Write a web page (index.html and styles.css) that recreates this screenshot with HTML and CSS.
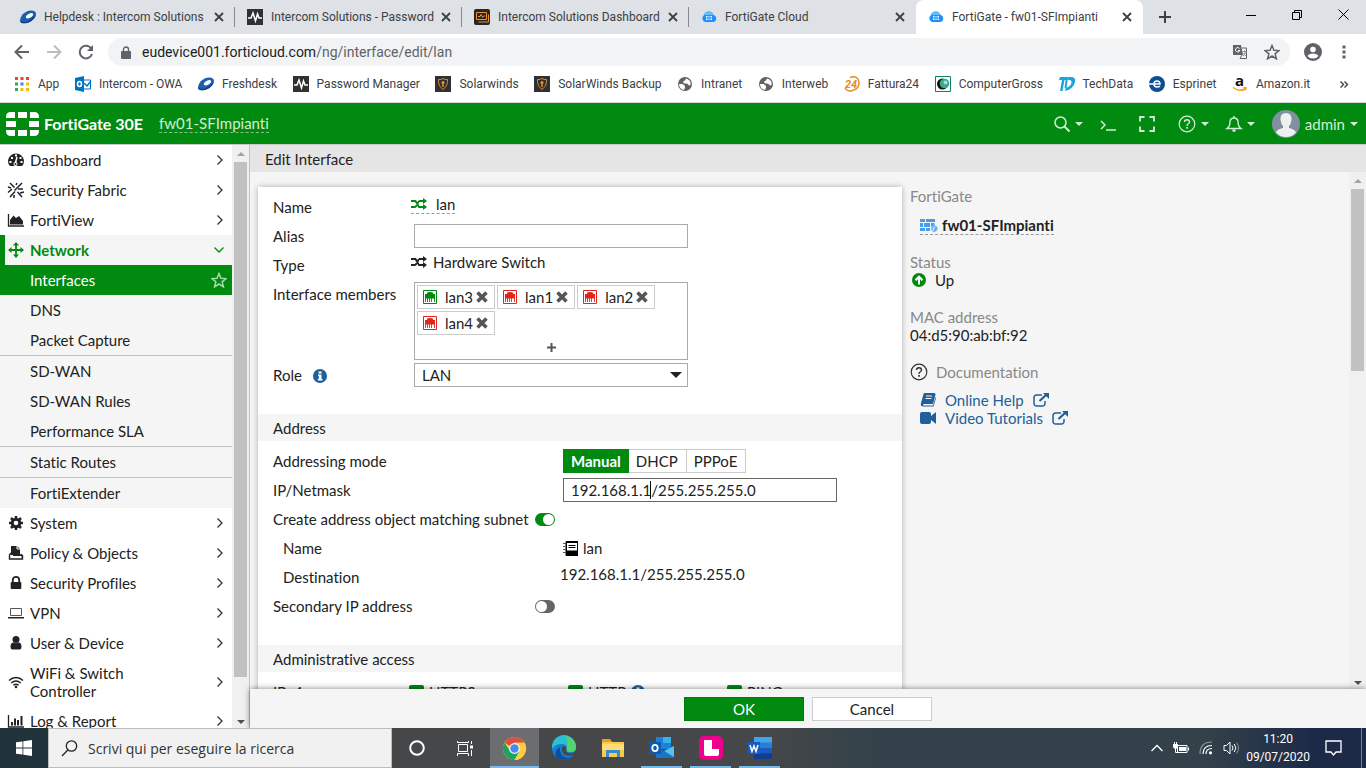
FILE: index.html
```html
<!DOCTYPE html>
<html lang="it">
<head>
	<meta charset="utf-8">
	<title>FortiGate - fw01-SFImpianti</title>
	<link rel="stylesheet" href="styles.css">
</head>
<body>

	<!-- shared icons -->
	<svg class="sprite" aria-hidden="true">
		<symbol id="i-close" viewBox="0 0 10 10"><path d="M1 1l8 8M9 1l-8 8" stroke="currentColor" stroke-width="1.8" fill="none"/></symbol>
		<symbol id="i-fresh" viewBox="0 0 16 16"><path d="M1 8Q4 2 11 1.500 16 1.500 16 5 15 11 8 13.500 1 15.500 0 12 0 10 1 8z" fill="#1b5fb0"/><path d="M0 11Q1 14 7 12.500 13 10 16 5 15 11 8 13.800 1 15.500 0 12z" fill="#0d3f80"/><ellipse cx="9.500" cy="6.800" rx="4" ry="2" transform="rotate(-30 9.500 6.800)" fill="#fff"/></symbol>
		<symbol id="i-pulse" viewBox="0 0 16 16"><path d="M0 0h16v16H0z" fill="#2f3032"/><path d="M1 9h3l2-5 2.500 8 2-7 1.500 4H15" stroke="#fff" stroke-width="1.5" fill="none"/></symbol>
		<symbol id="i-dash" viewBox="0 0 16 16"><rect width="16" height="16" rx="2" fill="#262626"/><path d="M2.500 3.500h10v7h-10zM4.500 13h10V5.500M4 7.500h2l1-2 1.500 3 1-1.500H11" stroke="#f0912d" fill="none"/></symbol>
		<symbol id="i-cloud" viewBox="0 0 16 16"><path d="M4 13a4 4 0 0 1-1-7 5 5 0 0 1 9.500 0A3.600 3.600 0 0 1 12.500 13z" fill="#1e90ff"/><path d="M3 6a5 5 0 0 1 9.500 0z" fill="#5fc0fb"/><path d="M5 7h6v4H5z" fill="#fff"/><path d="M7 7v4M9 7v4M5 9h6" stroke="#1e90ff"/></symbol>
		<symbol id="i-shield" viewBox="0 0 16 16"><path d="M0 0h16v16H0z" fill="#2f3032"/><path d="M3.500 3.500Q6 4 8 2.500 10 4 12.500 3.500 13 10 8 13.500 3 10 3.500 3.500z" stroke="#d98a2b" fill="none"/><circle cx="8" cy="6.500" r="1.500" fill="#f0912d"/><path d="M7.300 7h1.400v4H7.300z" fill="#f0912d"/></symbol>
		<symbol id="i-globe" viewBox="0 0 16 16"><circle cx="8" cy="8" r="7" fill="#5f6368"/><path d="M2 8h3.500L8 10v1.500L7 14Q2 13 2 8zM9 2.500L8 4.500 6 5.500 7 7.500h3l2 2 1.500-.5Q14.500 4 9 2.500z" fill="#fff"/></symbol>
		<symbol id="i-chev" viewBox="0 0 8 12"><path d="M1.500 1.500L6 6l-4.500 4.500" stroke="currentColor" stroke-width="1.3" fill="none"/></symbol>
		<symbol id="i-shuffle" viewBox="0 0 16 12"><path d="M0 3h4.500l3.500 6h5M0 9h4.500M8 3h5M4.500 9L8 3" stroke="currentColor" stroke-width="1.800" fill="none"/><path d="M12 0l4 3-4 3zM12 6l4 3-4 3z" fill="currentColor"/></symbol>
		<symbol id="i-port" viewBox="0 0 16 16"><path d="M1.500 1.500h13v13h-13z" fill="#fff" stroke="currentColor"/><path d="M3 9.500V5h2V3.500h1.500V3h3v.5H11V5h2v4.500z" fill="currentColor"/><path d="M3.500 9v4M5.500 9v4M7.500 9v4M9.500 9v4M12.500 9v4" stroke="currentColor" stroke-width=".9"/></symbol>
		<symbol id="i-x" viewBox="0 0 12 12"><path d="M1.500 1.500l9 9M10.500 1.500l-9 9" stroke="currentColor" stroke-width="3.500" fill="none"/></symbol>
		<symbol id="i-info" viewBox="0 0 14 14"><circle cx="7" cy="7" r="7" fill="#215f9a"/><path d="M5.500 2.500h3v2h-3zM5 5.500h3.500v4.500h1v1.500H4.800V10h1V7H5z" fill="#fff"/></symbol>
		<symbol id="i-ext" viewBox="0 0 16 14"><path d="M9 2H3.500A2.500 2.500 0 0 0 1 4.500v6A2.500 2.500 0 0 0 3.500 13h6a2.500 2.500 0 0 0 2.500-2.500V8" stroke="currentColor" stroke-width="1.500" fill="none"/><path d="M6.500 8L13 2" stroke="currentColor" stroke-width="2.200"/><path d="M10 0h6v6z" fill="currentColor"/></symbol>
		<symbol id="i-help" viewBox="0 0 18 18"><circle cx="9" cy="9" r="7.800" stroke="currentColor" stroke-width="1.200" fill="none"/><path d="M6.500 7Q6.500 4.800 9 4.800T11.500 7Q11.500 8 10 9 9 9.600 9 11" stroke="currentColor" stroke-width="1.400" fill="none"/><path d="M8.200 12h1.700v1.700H8.200z" fill="currentColor"/></symbol>
		<symbol id="i-star" viewBox="0 0 16 16"><path d="M8 1.500l1.900 4.700 5.100.4-3.900 3.200 1.300 5L8 12l-4.400 2.800 1.300-5L1 6.600l5.100-.4z" stroke="currentColor" stroke-width="1.500" fill="none"/></symbol>
	</svg>

	<header class="browser">
		<div class="tabstrip">
			<div class="tab"><svg width="16" height="16"><use href="#i-fresh"/></svg><span class="tab-title">Helpdesk : Intercom Solutions</span><button class="tab-close" aria-label="Chiudi"><svg width="10" height="10"><use href="#i-close"/></svg></button></div>
			<div class="tab"><svg width="16" height="16"><use href="#i-pulse"/></svg><span class="tab-title">Intercom Solutions - Password</span><button class="tab-close" aria-label="Chiudi"><svg width="10" height="10"><use href="#i-close"/></svg></button></div>
			<div class="tab"><svg width="16" height="16"><use href="#i-dash"/></svg><span class="tab-title">Intercom Solutions Dashboard</span><button class="tab-close" aria-label="Chiudi"><svg width="10" height="10"><use href="#i-close"/></svg></button></div>
			<div class="tab tab-last"><svg width="16" height="16"><use href="#i-cloud"/></svg><span class="tab-title">FortiGate Cloud</span><button class="tab-close" aria-label="Chiudi"><svg width="10" height="10"><use href="#i-close"/></svg></button></div>
			<div class="tab tab-active"><svg width="16" height="16"><use href="#i-cloud"/></svg><span class="tab-title">FortiGate - fw01-SFImpianti</span><button class="tab-close" aria-label="Chiudi"><svg width="10" height="10"><use href="#i-close"/></svg></button></div>
			<button class="new-tab" aria-label="Nuova scheda"><svg width="12" height="12" viewBox="0 0 12 12"><path d="M6 0v12M0 6h12" stroke="#3c4043" stroke-width="2"/></svg></button>
			<div class="win-buttons">
				<button aria-label="Riduci"><svg width="10" height="10" viewBox="0 0 10 10"><path d="M0 5.500h10" stroke="#000"/></svg></button>
				<button aria-label="Ripristina"><svg width="10" height="10" viewBox="0 0 10 10"><path d="M.5 2.500h7v7h-7zM2.500 2.500v-2h7v7h-2" stroke="#000" fill="none"/></svg></button>
				<button aria-label="Chiudi finestra"><svg width="11" height="11" viewBox="0 0 11 11"><path d="M.5.5l10 10M10.500.5l-10 10" stroke="#000"/></svg></button>
			</div>
		</div>
		<div class="toolbar">
			<button aria-label="Indietro"><svg width="16" height="16" viewBox="0 0 16 16"><path d="M15 8H2M8 1.500L1.500 8 8 14.500" stroke="#5f6368" stroke-width="2" fill="none"/></svg></button>
			<button aria-label="Avanti"><svg width="16" height="16" viewBox="0 0 16 16"><path d="M1 8h13M8 1.500L14.500 8 8 14.500" stroke="#bbbdbf" stroke-width="2" fill="none"/></svg></button>
			<button aria-label="Ricarica"><svg width="16" height="16" viewBox="0 0 16 16"><path d="M13.500 5A6.300 6.300 0 1 0 14 10" stroke="#5f6368" stroke-width="2" fill="none"/><path d="M15 1v6H9z" fill="#5f6368"/></svg></button>
			<div class="omnibox">
				<svg width="10" height="13" viewBox="0 0 10 13"><path d="M1 5h8q1 0 1 1v6q0 1-1 1H1q-1 0-1-1V6q0-1 1-1z" fill="#5f6368"/><path d="M2.500 5.500V3.500a2.500 2.500 0 0 1 5 0v2" stroke="#5f6368" stroke-width="1.400" fill="none"/></svg>
				<a class="url" href="#">eudevice001.forticloud.com<span>/ng/interface/edit/lan</span></a>
				<button aria-label="Traduci"><svg width="16" height="16" viewBox="0 0 16 16"><path d="M1 1h8l2 10H2q-1 0-1-1z" fill="#5f6368"/><path d="M10 4h4.500v10.500H8L10 11" stroke="#5f6368" fill="none"/><path d="M10.500 7.500h4M12.500 6.500v1M11 12q2-1.500 2.500-4.500M11.500 9l2.500 3" stroke="#8a8d91" fill="none"/><path d="M7.500 4.500a2.200 2.200 0 1 0 .3 2H6" stroke="#fff" fill="none"/></svg></button>
				<button aria-label="Preferiti"><svg width="16" height="16" class="c-gray"><use href="#i-star"/></svg></button>
			</div>
			<button class="profile" aria-label="Profilo"><svg width="18" height="18" viewBox="0 0 18 18"><circle cx="9" cy="9" r="9" fill="#5f6368"/><circle cx="9" cy="6.500" r="2.800" fill="#fff"/><path d="M3.500 13Q5 10.500 9 10.500T14.500 13Q12.500 15.500 9 15.500T3.500 13z" fill="#fff"/></svg></button>
			<button aria-label="Menu"><svg width="4" height="14" viewBox="0 0 4 14"><path d="M.5.5h3v3h-3zM.5 5.500h3v3h-3zM.5 10.500h3v3h-3z" fill="#5f6368"/></svg></button>
		</div>
		<nav class="bookmarks">
			<a href="#"><svg width="16" height="16" viewBox="0 0 16 16"><path d="M1 1h3v3H1zM6.500 1h3v3h-3zM12 1h3v3h-3z" fill="#ea4335"/><path d="M1 6.500h3v3H1z" fill="#34a853"/><path d="M6.500 6.500h3v3h-3z" fill="#4285f4"/><path d="M12 6.500h3v3h-3zM6.500 12h3v3h-3zM12 12h3v3h-3z" fill="#fbbc05"/><path d="M1 12h3v3H1z" fill="#34a853"/></svg>App</a>
			<a href="#"><svg width="16" height="16" viewBox="0 0 16 16"><path d="M8 4h7.500v9H8z" fill="#fff" stroke="#0072c6"/><path d="M9 7l3 3 4-5" stroke="#0072c6" stroke-width="1.500" fill="none"/><path d="M0 2l9-2v16l-9-2z" fill="#0072c6"/><ellipse cx="4.500" cy="8" rx="2" ry="2.500" stroke="#fff" stroke-width="1.500" fill="none"/></svg>Intercom - OWA</a>
			<a href="#"><svg width="16" height="16"><use href="#i-fresh"/></svg>Freshdesk</a>
			<a href="#"><svg width="16" height="16"><use href="#i-pulse"/></svg>Password Manager</a>
			<a href="#"><svg width="16" height="16"><use href="#i-shield"/></svg>Solarwinds</a>
			<a href="#"><svg width="16" height="16"><use href="#i-shield"/></svg>SolarWinds Backup</a>
			<a href="#"><svg width="16" height="16"><use href="#i-globe"/></svg>Intranet</a>
			<a href="#"><svg width="16" height="16"><use href="#i-globe"/></svg>Interweb</a>
			<a href="#"><svg width="16" height="16" viewBox="0 0 16 16"><path d="M6 1.500Q14-1 15 6T7 15Q3 15.500 1 12" stroke="#e88b1c" stroke-width="1.500" fill="none"/><text x="1" y="12" class="ico-24">24</text></svg>Fattura24</a>
			<a href="#"><svg width="16" height="16" viewBox="0 0 16 16"><path d="M.5.5h15v15H.5z" fill="#fff" stroke="#087f68"/><circle cx="7.500" cy="8" r="5.500" fill="#111"/><circle cx="9.500" cy="7.500" r="4.800" fill="#3aa78f"/><circle cx="10.500" cy="6.500" r="2" fill="#a9ddd0"/></svg>ComputerGross</a>
			<a href="#"><svg width="16" height="16" viewBox="0 0 16 16"><path d="M1 1h7L7 4H5.500L3.500 15H1l2-11H0zM9 1h3q5 0 4 5-1.500 7-10 9l.7-3Q12.500 10 12.500 6q0-2-2-2H8.500z" fill="#1ba5dd"/><path d="M8 1L6.500 12" stroke="#1ba5dd" stroke-width="2"/></svg>TechData</a>
			<a href="#"><svg width="16" height="16" viewBox="0 0 16 16"><circle cx="8" cy="8" r="8" fill="#0b4d96"/><path d="M0 8h11Q11 5 8 5T5 8Q5 11 8 11q2 0 3-1" stroke="#fff" stroke-width="1.600" fill="none"/></svg>Esprinet</a>
			<a href="#"><svg width="16" height="16" viewBox="0 0 16 16"><text x="3" y="10" class="ico-a">a</text><path d="M1 11.500q6 4.500 12 1.500M11.500 11.500l2.500.3-.8 2.500" stroke="#f90" stroke-width="1.500" fill="none"/></svg>Amazon.it</a>
			<button class="more" aria-label="Altri preferiti"><svg width="8" height="7" viewBox="0 0 8 7"><path d="M.5.5l3 3-3 3M4.500.5l3 3-3 3" stroke="#3c4043" stroke-width="1.400" fill="none"/></svg></button>
		</nav>
	</header>

	<div class="topbar">
		<svg width="33" height="24" viewBox="0 0 33 24"><path d="M12 0h9v6h-9zM12 18h9v6h-9zM0 9h10v6H0zM23 9h10v6H23zM5 0h4v6H0V5q0-5 5-5zM24 0h4q5 0 5 5v1h-9zM0 18h9v6H5q-5 0-5-5zM24 18h9v1q0 5-5 5h-4z" fill="#fff"/></svg>
		<b class="model">FortiGate 30E</b>
		<a class="host" href="#">fw01-SFImpianti</a>
		<div class="top-actions">
			<button aria-label="Search"><svg width="16" height="16" viewBox="0 0 16 16"><circle cx="6.500" cy="6.500" r="5.500" stroke="currentColor" stroke-width="1.500" fill="none"/><path d="M10.500 10.500L15.500 15.500" stroke="currentColor" stroke-width="2"/></svg><i class="down"></i></button>
			<button class="solo" aria-label="CLI console"><svg width="16" height="16" viewBox="0 0 16 16"><path d="M1 5l4 4-4 4M6 14h10" stroke="currentColor" stroke-width="1.500" fill="none"/></svg></button>
			<button class="solo" aria-label="Full screen"><svg width="16" height="16" viewBox="0 0 16 16"><path d="M1 5.500V1h4.500M10.500 1H15v4.500M15 10.500V15h-4.500M5.500 15H1v-4.500" stroke="currentColor" stroke-width="1.800" fill="none"/></svg></button>
			<button aria-label="Help"><svg width="18" height="18"><use href="#i-help"/></svg><i class="down"></i></button>
			<button aria-label="Notifications"><svg width="16" height="16" viewBox="0 0 16 16"><path d="M1 12.500q3-2 3-7Q4.500 2 8 2t4 3.500q0 5 3 7zM8 0v2" stroke="currentColor" stroke-width="1.400" fill="none"/><path d="M6 13.500h4Q9.500 16 8 16t-2-2.500z" fill="currentColor"/></svg><i class="down"></i></button>
			<button><svg width="28" height="28" viewBox="0 0 28 28"><circle cx="14" cy="14" r="14" fill="#8190a0"/><path d="M14 3q6 0 5.500 7-.5 4-2.500 6v2q6 1 7 4.500Q20 27 14 27T4 22.500Q5 19 11 18v-2q-2-2-2.500-6Q8 3 14 3z" fill="#edf0ef"/></svg>admin<i class="down"></i></button>
		</div>
	</div>

	<div class="workspace">
		<nav class="sidebar">
			<a class="item" href="#"><svg width="16" height="16" viewBox="0 0 16 16"><path d="M2 14a8 7.500 0 1 1 12 0z" fill="currentColor"/><path d="M7 12.500L9 5" stroke="#fff" stroke-width="1.500"/><path d="M7 2.500h2v2H7zM3 5h2v2H3zM11.500 5h2v2h-2zM1.500 9h2v2h-2zM12.500 9h2v2h-2z" fill="#fff"/><circle cx="7.500" cy="12" r="2" fill="#fff"/><circle cx="7.500" cy="12" r="1" fill="currentColor"/></svg><span>Dashboard</span><svg class="chev" width="8" height="12"><use href="#i-chev"/></svg></a>
			<a class="item" href="#"><svg width="16" height="16" viewBox="0 0 16 16"><path d="M2 1l4.500 4.500M14 1L6.500 8.500M9.500 10l4.500 5M2 15l5-5.500M0 5l3 1M0 10.500L4 7M10 7h5M12 11l4-1M9 1L8 3M6 13v3" stroke="currentColor" stroke-width="1.500"/></svg><span>Security Fabric</span><svg class="chev" width="8" height="12"><use href="#i-chev"/></svg></a>
			<a class="item" href="#"><svg width="16" height="16" viewBox="0 0 16 16"><path d="M.5 2v12H16" stroke="currentColor" fill="none" stroke-width="1.300"/><path d="M2 12.500V8l3.500-4.500L8 6l3-2 4 5v3.500z" fill="currentColor"/></svg><span>FortiView</span><svg class="chev" width="8" height="12"><use href="#i-chev"/></svg></a>
			<a class="item item-open" href="#"><svg width="16" height="16" viewBox="0 0 16 16"><path d="M8 2v12M2 8h12" stroke="currentColor" stroke-width="1.800"/><path d="M8 0l3 3.500H5zM8 16l3-3.500H5zM0 8l3.500-3v6zM16 8l-3.500-3v6z" fill="currentColor"/></svg><span>Network</span><svg class="chev" width="12" height="8" viewBox="0 0 12 8"><path d="M1.500 1.500L6 6l4.500-4.500" stroke="currentColor" stroke-width="1.300" fill="none"/></svg></a>
			<div class="submenu">
				<a class="item item-active" href="#"><span>Interfaces</span><svg class="fav" width="16" height="16"><use href="#i-star"/></svg></a>
				<a class="item" href="#"><span>DNS</span></a>
				<a class="item" href="#"><span>Packet Capture</span></a>
				<hr>
				<a class="item" href="#"><span>SD-WAN</span></a>
				<a class="item" href="#"><span>SD-WAN Rules</span></a>
				<a class="item" href="#"><span>Performance SLA</span></a>
				<hr>
				<a class="item" href="#"><span>Static Routes</span></a>
				<hr>
				<a class="item" href="#"><span>FortiExtender</span></a>
			</div>
			<a class="item" href="#"><svg width="16" height="16" viewBox="0 0 16 16"><circle cx="8" cy="8" r="3.800" stroke="currentColor" stroke-width="3" fill="none"/><path d="M8 1v3M8 12v3M1 8h3M12 8h3M3 3l2.500 2.500M13 3l-2.500 2.500M3 13l2.500-2.500M13 13l-2.500-2.500" stroke="currentColor" stroke-width="2.500"/></svg><span>System</span><svg class="chev" width="8" height="12"><use href="#i-chev"/></svg></a>
			<a class="item" href="#"><svg width="16" height="16" viewBox="0 0 16 16"><path d="M3 1h6l3 3v6H3z" fill="currentColor"/><path d="M9 1v3h3" stroke="#fff" fill="none"/><path d="M3 8L1.500 10v4h13v-3.500L12.500 9" stroke="currentColor" stroke-width="1.400" fill="none"/><path d="M5 10.500h9v2" stroke="currentColor" fill="none"/></svg><span>Policy &amp; Objects</span><svg class="chev" width="8" height="12"><use href="#i-chev"/></svg></a>
			<a class="item" href="#"><svg width="16" height="16" viewBox="0 0 16 16"><path d="M3.500 7h9q.8 0 .8.800v5.400q0 .8-.8.800h-9q-.8 0-.8-.8V7.800Q2.700 7 3.500 7z" fill="currentColor"/><path d="M4.800 7V5a3.200 3.200 0 0 1 6.400 0v2" stroke="currentColor" stroke-width="1.800" fill="none"/></svg><span>Security Profiles</span><svg class="chev" width="8" height="12"><use href="#i-chev"/></svg></a>
			<a class="item" href="#"><svg width="16" height="16" viewBox="0 0 16 16"><path d="M2.500 3.500h11v7h-11z" stroke="#555" fill="none"/><path d="M0 12h16v1.500H0z" fill="currentColor"/></svg><span>VPN</span><svg class="chev" width="8" height="12"><use href="#i-chev"/></svg></a>
			<a class="item" href="#"><svg width="16" height="16" viewBox="0 0 16 16"><circle cx="8" cy="4.500" r="3.500" fill="currentColor"/><path d="M2.500 12q0-4.500 3-4.500 2.500 1.500 5 0 3 0 3 4.500 0 2.500-2 2.500h-7q-2 0-2-2.500z" fill="currentColor"/></svg><span>User &amp; Device</span><svg class="chev" width="8" height="12"><use href="#i-chev"/></svg></a>
			<a class="item" href="#"><svg width="16" height="16" viewBox="0 0 16 16"><path d="M1 6.500q7-6 14 0M3.300 9q4.700-4 9.400 0M5.500 11.300q2.500-2 5 0" stroke="currentColor" stroke-width="1.600" fill="none"/><circle cx="8" cy="13" r="1.300" fill="currentColor"/></svg><span>WiFi &amp; Switch Controller</span><svg class="chev" width="8" height="12"><use href="#i-chev"/></svg></a>
			<a class="item" href="#"><svg width="16" height="16" viewBox="0 0 16 16"><path d="M.5 2v12H16" stroke="currentColor" fill="none" stroke-width="1.300"/><path d="M3 9h2v3.500H3zM6 5.500h2v7H6zM9 7h2v5.500H9zM12.500 3h2v9.500h-2z" fill="currentColor"/></svg><span>Log &amp; Report</span><svg class="chev" width="8" height="12"><use href="#i-chev"/></svg></a>
		</nav>
		<div class="scroll scroll-side"><i class="arrow-up"></i><div class="thumb"></div><i class="arrow-down"></i></div>

		<main class="main">
			<h1 class="page-title">Edit Interface</h1>
			<div class="scroller">
				<form class="card" id="lanform">
					<section class="fields">
						<span class="label">Name</span>
						<div class="value"><a class="dashed" href="#"><svg width="16" height="12" class="c-green"><use href="#i-shuffle"/></svg>lan</a></div>
						<label class="label" for="alias">Alias</label>
						<input class="text" type="text" id="alias">
						<span class="label">Type</span>
						<div class="value hw"><svg width="16" height="12"><use href="#i-shuffle"/></svg>Hardware Switch</div>
						<span class="label">Interface members</span>
						<div class="members">
							<span class="tag"><svg width="16" height="16" class="c-green"><use href="#i-port"/></svg><span>lan3</span><button type="button" aria-label="Remove lan3"><svg width="12" height="12"><use href="#i-x"/></svg></button></span>
							<span class="tag"><svg width="16" height="16" class="c-red"><use href="#i-port"/></svg><span>lan1</span><button type="button" aria-label="Remove lan1"><svg width="12" height="12"><use href="#i-x"/></svg></button></span>
							<span class="tag"><svg width="16" height="16" class="c-red"><use href="#i-port"/></svg><span>lan2</span><button type="button" aria-label="Remove lan2"><svg width="12" height="12"><use href="#i-x"/></svg></button></span>
							<span class="tag"><svg width="16" height="16" class="c-red"><use href="#i-port"/></svg><span>lan4</span><button type="button" aria-label="Remove lan4"><svg width="12" height="12"><use href="#i-x"/></svg></button></span>
							<button type="button" class="add" aria-label="Add member"><svg width="9" height="9" viewBox="0 0 9 9"><path d="M4.500 0v9M0 4.500h9" stroke="#555" stroke-width="2"/></svg></button>
						</div>
						<label class="label" for="role">Role <svg width="14" height="14"><use href="#i-info"/></svg></label>
						<div class="select"><select id="role"><option>LAN</option><option>WAN</option><option>DMZ</option></select></div>
					</section>

					<h2>Address</h2>
					<section class="fields fields-wide">
						<span class="label">Addressing mode</span>
						<div class="modes"><button type="button" class="on">Manual</button><button type="button">DHCP</button><button type="button">PPPoE</button></div>
						<label class="label" for="ip">IP/Netmask</label>
						<div class="ip"><input class="text focused" type="text" id="ip" value="192.168.1.1/255.255.255.0"><i class="caret"></i></div>
						<div class="switch-row"><label for="mk">Create address object matching subnet</label><input type="checkbox" class="toggle" id="mk" checked></div>
						<span class="label sub">Name</span>
						<div class="value obj"><svg width="16" height="15" viewBox="0 0 16 15"><path d="M3 .5h11.500v14H3z" fill="#fff" stroke="#000"/><path d="M3 0h12v2H3zM3 9.500h12V15H3z" fill="#000"/><path d="M5.500 4.500h7M5.500 6.500h7M3.500 1v13" stroke="#000"/><path d="M0 2.500h3M0 5.500h3M0 8.500h3M0 11.500h3" stroke="#555"/></svg>lan</div>
						<span class="label sub">Destination</span>
						<div class="value">192.168.1.1/255.255.255.0</div>
						<div class="switch-row"><label for="sec">Secondary IP address</label><input type="checkbox" class="toggle" id="sec"></div>
					</section>

					<h2>Administrative access</h2>
					<section class="access">
						<span>IPv4</span>
						<label><input type="checkbox" class="tick" checked>HTTPS</label>
						<label><input type="checkbox" class="tick" checked>HTTP <svg width="14" height="14"><use href="#i-info"/></svg></label>
						<label><input type="checkbox" class="tick" checked>PING</label>
					</section>
				</form>

				<aside class="info">
					<h3>FortiGate</h3>
					<p class="device"><a class="dashed" href="#"><svg width="18" height="13" viewBox="0 0 18 13"><path d="M0 0h5v3H0zM6 0h9v3H6zM0 4h3v4H0zM4 4h6v4H4zM11 4h3v2l-3 2zM0 9h5v3H0zM6 9h4v3H6z" fill="#4a9be5"/><path d="M14 13q-4-1-2.500-4.500L14.500 4q0 2 1.500 4 .5-.5.500-1.500 1.500 2 1 4Q16.500 13 14 13z" fill="#6fb3ee"/><path d="M13 11.500q0-2 1.500-3.500" stroke="#fff" fill="none"/></svg>fw01-SFImpianti</a></p>
					<h3>Status</h3>
					<p class="status"><svg width="14" height="14" viewBox="0 0 14 14"><circle cx="7" cy="7" r="7" fill="#008a10"/><path d="M7 11.500V4M3.500 7.200L7 3.700l3.500 3.500" stroke="#fff" stroke-width="2" fill="none"/></svg>Up</p>
					<h3>MAC address</h3>
					<p>04:d5:90:ab:bf:92</p>
					<h3 class="docs"><svg width="18" height="18"><use href="#i-help"/></svg>Documentation</h3>
					<a class="doc" href="#"><svg width="16" height="14" viewBox="0 0 16 14"><path d="M5 0h9q2 0 1.500 1.500L13 11H3.500q-1 1 0 1.500H13L15.500 4 16 5l-2.500 8.500H3Q0 13 1 10L3.500 1Q4 0 5 0z" fill="currentColor"/><path d="M6 3h6M5.500 5.500h6" stroke="#f5f5f5"/></svg>Online Help<svg width="16" height="14"><use href="#i-ext"/></svg></a>
					<a class="doc" href="#"><svg width="16" height="12" viewBox="0 0 16 12"><path d="M2 0h7q2 0 2 2v2l5-4v12l-5-4v2q0 2-2 2H2q-2 0-2-2V2Q0 0 2 0z" fill="currentColor"/></svg>Video Tutorials<svg width="16" height="14"><use href="#i-ext"/></svg></a>
				</aside>
				<div class="scroll scroll-main"><i class="arrow-up"></i><div class="thumb"></div><i class="arrow-down"></i></div>
			</div>
			<footer class="actions"><button class="ok" form="lanform">OK</button><button class="cancel">Cancel</button></footer>
		</main>
	</div>

	<footer class="taskbar">
		<button class="start" aria-label="Start"><svg width="16" height="16" viewBox="0 0 16 16"><path d="M0 2.300L6.500 1.400v6.200H0zM7.300 1.300L16 0v7.600H7.300zM0 8.400h6.500v6.200L0 13.700zM7.300 8.400H16V16l-8.700-1.300z" fill="#fff"/></svg></button>
		<label class="search"><svg width="17" height="17" viewBox="0 0 17 17"><circle cx="10.500" cy="6" r="5.200" stroke="#222" stroke-width="1.300" fill="none"/><path d="M6.800 10L1 16" stroke="#222" stroke-width="1.300"/></svg><input type="text" placeholder="Scrivi qui per eseguire la ricerca" aria-label="Cerca"></label>
		<button class="task" aria-label="Cortana"><svg width="16" height="16" viewBox="0 0 16 16"><circle cx="8" cy="8" r="6.800" stroke="#fff" stroke-width="2" fill="none"/></svg></button>
		<button class="task" aria-label="Visualizzazione attività"><svg width="17" height="17" viewBox="0 0 17 17"><path d="M1.500 4.500h9v7h-9zM.5 1v1.500h11V1M.5 16v-2.500h11V16M14.500 1v3M14.500 10v6" stroke="#fff" fill="none"/><path d="M13 5.500h3v3h-3z" fill="#fff"/></svg></button>
		<button class="task task-active" aria-label="Chrome"><svg width="23" height="23" viewBox="0 0 24 24"><circle cx="12" cy="12" r="12" fill="#ffcd40"/><path d="M12 12L1.600 6A12 12 0 0 1 22.400 6H12z" fill="#dd4f40"/><path d="M1.600 6A12 12 0 0 0 12 24l5.500-9.500H7.500z" fill="#1da261"/><path d="M12 6h10.400A12 12 0 0 1 12 24l5-8.500z" fill="#ffcd40"/><circle cx="12" cy="12" r="5.700" fill="#f3f3f3"/><circle cx="12" cy="12" r="4.400" fill="#4a8af4"/></svg></button>
		<button class="task" aria-label="Edge"><svg width="24" height="24" viewBox="0 0 24 24"><circle cx="12" cy="12" r="12" fill="#1580d0"/><path d="M0 11A12 12 0 0 1 24 11q0 5-5 5-5 0-4.500-2.500Q16 8 9.500 8 3 8 0 13z" fill="#2bbfd2"/><path d="M13 0Q24 2 24 12q-1 4-5 4-5 0-4.500-2.500Q17 5 13 0z" fill="#55d36f"/><path d="M8 11q-1 9 7 11 4 0 7-4A12 12 0 0 1 4 21Q2 14 8 11z" fill="#0b4f9c"/><path d="M10 11q4-3 4.500 2.500Q13 16 18 17.500q2 0 6-2.500v3l-2 1Q19 20 15 19.500 9 18 10 11z" fill="#464749"/></svg></button>
		<button class="task" aria-label="Esplora file"><svg width="22" height="19" viewBox="0 0 22 19"><path d="M0 1h8l2 2h12v15H0z" fill="#f8cb4e"/><path d="M0 0h8l2 3H0z" fill="#e8a020"/><path d="M0 5h22v6H0z" fill="#ffdc74"/><path d="M4 18v-7h14v7h-3v-4H7v4z" fill="#398bd0"/></svg></button>
		<button class="task task-run" aria-label="Outlook"><svg width="25" height="22" viewBox="0 0 25 22"><path d="M7 0h15v12H7z" fill="#1b82d8"/><path d="M14 0h8v6h-8z" fill="#35b2ee"/><path d="M7 9l9 6 9-6v11q0 1-1 1H7z" fill="#1a74c8"/><path d="M25 9v11L15 14z" fill="#54c2f2"/><path d="M0 5h12v12H0z" fill="#0b5cb0"/><ellipse cx="6" cy="11" rx="2.700" ry="3.200" stroke="#fff" stroke-width="1.800" fill="none"/></svg></button>
		<button class="task task-run" aria-label="L"><svg width="24" height="24" viewBox="0 0 24 24"><rect width="24" height="24" rx="5" fill="#ec008c"/><path d="M5 4h8v9h7v5q0 2-2 2H7q-2 0-2-2z" fill="#fff"/></svg></button>
		<button class="task task-run" aria-label="Word"><svg width="24" height="22" viewBox="0 0 24 22"><path d="M6 0h18v6H6z" fill="#41a5ee"/><path d="M6 5.500h18V11H6z" fill="#2b7cd3"/><path d="M6 11h18v5.500H6z" fill="#185abd"/><path d="M6 16.500h18V22H6z" fill="#103f91"/><path d="M0 5h12v12H0z" fill="#185abd"/><path d="M2 8l2 6.500L6 9l2 5.500L10 8" stroke="#fff" stroke-width="1.500" fill="none"/></svg></button>
		<div class="tray">
			<svg width="12" height="8" viewBox="0 0 12 8"><path d="M.5 7L6 1.500 11.500 7" stroke="#fff" stroke-width="1.300" fill="none"/></svg>
			<svg width="16" height="12" viewBox="0 0 16 12"><path d="M4.500 3.500h9.500v7H4.500z" stroke="#fff" fill="none"/><path d="M6 5h7v4H6zM15 5.500h1v3h-1zM0 2h5v3q-1 2-2.500 2T0 5z" fill="#fff"/><path d="M1.500 0v2M3.500 0v2M2.500 6v4.500H5" stroke="#fff" fill="none"/></svg>
			<svg width="14" height="14" viewBox="0 0 14 14"><path d="M1 13Q1 1 13 1" stroke="#8d969a" stroke-width="1.200" fill="none"/><path d="M4 13q0-8.500 9-8.500M7 13q0-5.500 6-5.500" stroke="#fff" stroke-width="1.200" fill="none"/><circle cx="11.500" cy="11.800" r="1.600" fill="#fff"/></svg>
			<svg width="17" height="14" viewBox="0 0 17 14"><path d="M1 4.500h2.500L7 1v12L3.500 9.500H1z" stroke="#fff" fill="none"/><path d="M9 4.500q2 2.500 0 5M11.300 3q3 4 0 8" stroke="#fff" fill="none"/><path d="M13.500 1.500q4 5.500 0 11" stroke="#8d969a" fill="none"/></svg>
			<div class="clock">11:20<br>09/07/2020</div>
			<svg width="17" height="16" viewBox="0 0 17 16"><path d="M1 1h15v11h-5l-2.500 3L6 12H1z" stroke="#fff" stroke-width="1.300" fill="none"/></svg>
			<i class="peek"></i>
		</div>
	</footer>
</body>
</html>
```

FILE: styles.css
```css
* {
	box-sizing: border-box;
}

body {
	margin: 0;
	height: 100vh;
	display: flex;
	flex-direction: column;
	overflow: hidden;
	font-family: Lato, "Liberation Sans", sans-serif;
	font-size: 15px;
	line-height: 18px;
	font-variant-ligatures: none;
	color: #222;
}

a {
	color: inherit;
	text-decoration: none;
}

button {
	margin: 0;
	padding: 0;
	border: 0;
	background: none;
	color: inherit;
	font: inherit;
	display: flex;
	align-items: center;
	justify-content: center;
}

svg {
	flex: none;
	overflow: visible;
}

h1, h2, h3, p {
	margin: 0;
	font-size: 15px;
	font-weight: normal;
}

.sprite {
	display: none;
}

.c-green { color: #008a10; }
.c-red { color: #e1251b; }
.c-gray { color: #5f6368; }

/* browser window */
.browser {
	flex: none;
	background: #fff;
	border-bottom: 1px solid #d5d7da;
	font-family: Roboto, "Open Sans", sans-serif;
	font-size: 12px;
	color: #3c4043;
}

.tabstrip {
	display: flex;
	height: 34px;
	padding-left: 8px;
	background: #dee1e6;
}

.tab {
	flex: 0 1 227px;
	min-width: 0;
	display: flex;
	align-items: center;
	padding: 0 8px 0 12px;
	position: relative;
}

.tab:not(.tab-last):not(.tab-active)::after {
	content: "";
	position: absolute;
	right: 0;
	top: 7px;
	height: 20px;
	border-right: 1px solid #85888c;
}

.tab-title {
	flex: 1;
	min-width: 0;
	margin-left: 8px;
	overflow: hidden;
	white-space: nowrap;
}

.tab-close {
	width: 16px;
	height: 16px;
}

.tab-active {
	background: #fff;
	border-radius: 8px 8px 0 0;
}

.new-tab {
	width: 44px;
}

.win-buttons {
	display: flex;
	margin-left: auto;
}

.win-buttons button {
	width: 46px;
	height: 29px;
}

.toolbar {
	display: flex;
	align-items: center;
	gap: 16px;
	height: 36px;
	padding: 0 20px 0 14px;
}

.omnibox {
	flex: 1;
	display: flex;
	align-items: center;
	gap: 16px;
	height: 28px;
	margin: 0 -2px;
	padding: 0 10px 0 13px;
	border-radius: 14px;
	background: #f1f3f4;
}

.url {
	flex: 1;
	margin-left: -5px;
	font-size: 14px;
	color: #202124;
}

.url span {
	color: #5f6368;
}

.profile {
	margin-right: 4px;
}

.bookmarks {
	display: flex;
	align-items: center;
	justify-content: space-between;
	height: 32px;
	padding: 0 18px 4px 14px;
}

.bookmarks a {
	display: flex;
	align-items: center;
	gap: 8px;
	white-space: nowrap;
}

.more {
	margin-left: 14px;
}

.ico-24 {
	font: italic bold 11px Roboto, sans-serif;
	fill: #e88b1c;
}

.ico-a {
	font: bold 15px "Open Sans", sans-serif;
	fill: #111;
}

/* green bar */
.topbar {
	flex: none;
	display: flex;
	align-items: center;
	height: 42px;
	padding: 0 8px 0 6px;
	background: #008a10;
	border-bottom: 1px solid #c8c8c8;
	color: #fff;
}

.model {
	margin: 0 16px 0 5px;
	font-size: 16px;
}

.host {
	border-bottom: 1px dashed #7fc487;
	color: #d5ecd7;
}

.top-actions {
	display: flex;
	align-items: center;
	gap: 17px;
	margin-left: auto;
	color: #d5ecd7;
}

.top-actions button {
	gap: 5px;
}

.top-actions .solo {
	padding-right: 6px;
}

.down {
	border: 4px solid transparent;
	border-top-color: currentColor;
	border-bottom: 0;
}

/* left menu */
.workspace {
	flex: 1;
	min-height: 0;
	display: flex;
}

.sidebar {
	flex: none;
	width: 232px;
	overflow: hidden;
	background: #fff;
}

.item {
	display: flex;
	align-items: center;
	gap: 6px;
	padding: 6px 8px;
}

.item span {
	flex: 1;
	padding-right: 60px;
}

.item svg:first-child {
	margin-bottom: 1px;
}

.item .chev {
	color: #333;
}

.item-open {
	padding-left: 3px;
	border-left: 5px solid #008a10;
	background: #f5f5f5;
	color: #008a10;
	font-weight: bold;
}

.item .fav {
	margin: 0 -3px 0 0;
	color: #a5dbab;
}

.item-open .chev {
	margin-right: -1px;
	color: #008a10;
}

.submenu {
	background: #f5f5f5;
}

.submenu .item {
	padding-left: 30px;
}

.submenu .item-active {
	background: #008a10;
	color: #fff;
}

.submenu hr {
	margin: 0;
	border: 0;
	border-top: 1px solid #c2c2c2;
}

/* scroll bars */
.scroll {
	flex: none;
	width: 17px;
	display: flex;
	flex-direction: column;
	align-items: center;
	padding: 7px 2px 4px;
	background: #f0f0f0;
}

.scroll-side {
	width: 18px;
	border-right: 1px solid #c2c2c2;
}

.thumb {
	align-self: stretch;
	margin-top: 6px;
	background: #c1c1c1;
}

.scroll-side .thumb {
	height: 90%;
}

.scroll-main .thumb {
	height: 36%;
}

.arrow-up {
	border: 4px solid transparent;
	border-bottom-color: #a3a3a3;
	border-top: 0;
}

.arrow-down {
	margin-top: auto;
	border: 4px solid transparent;
	border-top-color: #505050;
	border-bottom: 0;
}

/* page */
.main {
	flex: 1;
	min-width: 0;
	display: flex;
	flex-direction: column;
	background: #f5f5f5;
}

.page-title {
	flex: none;
	padding: 5px 15px 4px;
	background: #e5e5e5;
}

.scroller {
	flex: 1;
	min-height: 0;
	display: flex;
	overflow: hidden;
}

.card {
	flex: 0 1 644px;
	align-self: flex-start;
	margin: 15px 0 0 8px;
	background: #fff;
	box-shadow: 0 0 6px rgba(0, 0, 0, 0.3);
}

.fields {
	display: grid;
	grid-template-columns: 138px 1fr;
	grid-auto-rows: minmax(24px, auto);
	row-gap: 5px;
	padding: 8px 15px 27px;
}

.fields-wide {
	grid-template-columns: 287px 1fr;
}

.label {
	padding-top: 3px;
}

.label svg {
	margin: 0 0 -2px 7px;
}

.sub {
	padding-left: 10px;
}

.dashed {
	display: inline-flex;
	align-items: center;
	gap: 9px;
	border-bottom: 1px dashed #999;
}

.hw, .obj {
	display: flex;
	align-items: center;
	align-self: start;
	gap: 6px;
}

.obj {
	gap: 4px;
	padding: 3px 3px 0;
}

.text {
	width: 274px;
	height: 24px;
	margin-left: 3px;
	padding: 0 7px;
	border: 1px solid #aaa;
	background: #fff;
	color: #222;
	font: inherit;
}

.text.focused {
	border-color: #666;
}

.ip {
	position: relative;
}

/* insertion point inside the focused field */
.caret {
	position: absolute;
	left: 90px;
	top: 3px;
	height: 18px;
	border-left: 1px solid #000;
}

.members {
	display: flex;
	flex-wrap: wrap;
	gap: 2px;
	width: 274px;
	height: 78px;
	margin: 0 0 -2px 3px;
	padding: 2px;
	border: 1px solid #aaa;
}

.tag {
	display: flex;
	align-items: center;
	height: 24px;
	padding: 0 6px 0 4px;
	border: 1px solid #ccc;
}

.tag span {
	margin: 0 3px 0 7px;
}

.tag button {
	color: #555;
}

.add {
	width: 100%;
	height: 20px;
}

.select {
	position: relative;
	width: 274px;
	margin-left: 3px;
}

.select::after {
	content: "";
	position: absolute;
	right: 6px;
	top: 9px;
	border: 6px solid transparent;
	border-top-color: #222;
	border-bottom: 0;
	pointer-events: none;
}

.select select {
	width: 100%;
	height: 24px;
	padding: 0 7px;
	border: 1px solid #aaa;
	border-radius: 0;
	background: #fff;
	color: #222;
	font: inherit;
	appearance: none;
}

.card h2 {
	padding: 5px 15px 4px;
	background: #f5f5f5;
}

.card h2 + section {
	padding-top: 8px;
}

.modes {
	display: flex;
	margin-left: 3px;
}

.modes button {
	height: 24px;
	padding: 0 8px 0 7px;
	border: 1px solid #ccc;
	border-left: 0;
}

.modes .on {
	padding: 0 7px;
	border: 1px solid #008a10;
	background: #008a10;
	color: #fff;
	font-weight: bold;
}

.switch-row {
	grid-column: 1 / -1;
	display: grid;
	grid-template-columns: 262px auto;
	justify-content: start;
	align-items: center;
}

.toggle {
	appearance: none;
	width: 20px;
	height: 13px;
	margin: 0;
	padding: 1px;
	border-radius: 7px;
	background: #666;
}

.toggle::before {
	content: "";
	display: block;
	width: 11px;
	height: 11px;
	border-radius: 50%;
	background: #fff;
}

.toggle:checked {
	background: #008a10;
}

.toggle:checked::before {
	margin-left: auto;
}

.access {
	display: grid;
	grid-template-columns: 136px 159px 159px 1fr;
	padding: 8px 15px 16px;
	line-height: 24px;
}

.access label {
	display: flex;
	align-items: center;
	gap: 5px;
}

.tick {
	appearance: none;
	width: 15px;
	height: 15px;
	margin: 0;
	border-radius: 2px;
	background: #008a10;
}

.tick:checked::before {
	content: "";
	display: block;
	width: 9px;
	height: 5px;
	margin: 3px 3px 0;
	border: solid #fff;
	border-width: 0 0 2px 2px;
	transform: rotate(-45deg);
}

/* right column */
.info {
	flex: 1;
	padding: 15px 8px;
}

.info h3 {
	color: #888;
}

.info p {
	margin-bottom: 19px;
}

.info .device {
	margin: 11px 10px 18px;
	font-weight: bold;
}

.device .dashed {
	gap: 4px;
}

.status {
	display: flex;
	align-items: center;
	gap: 9px;
	padding-left: 2px;
}

.info .docs {
	display: flex;
	align-items: center;
	gap: 8px;
	margin-bottom: 10px;
}

.docs svg {
	color: #333;
}

.doc {
	display: flex;
	align-items: center;
	gap: 9px;
	padding-left: 10px;
	color: #215f9a;
}

.actions {
	flex: none;
	display: flex;
	gap: 8px;
	justify-content: center;
	height: 39px;
	padding: 8px 0 7px;
	background: #f5f5f5;
	box-shadow: 0 0 6px rgba(0, 0, 0, 0.5);
	z-index: 1;
}

.actions button {
	width: 120px;
	border: 1px solid #ccc;
	background: #fff;
}

.actions .ok {
	border-color: #007a0e;
	background: #008a10;
	color: #fff;
}

/* windows taskbar */
.taskbar {
	flex: none;
	position: relative;
	z-index: 2;
	display: flex;
	height: 40px;
	background: linear-gradient(90deg, #20323a 4%, #464749 30%, #464749 56%, #33424a 64%, #33424a 88%, #1c2a48 96%);
	color: #fff;
}

.start {
	width: 48px;
}

.search {
	width: 344px;
	display: flex;
	align-items: center;
	gap: 10px;
	padding-left: 12px;
	border: 1px solid #bbb;
	background: #f1f1f1;
}

.search input {
	flex: 1;
	min-width: 0;
	padding: 0;
	border: 0;
	background: none;
	font-family: "Open Sans", sans-serif;
	font-size: 14px;
}

.search input::placeholder {
	color: #333;
}

.task {
	width: 49px;
	border: solid transparent;
	border-width: 2px 0;
}

.task-active {
	background: #6c6d70;
	border-color: #6c6d70;
	border-bottom-color: #76b9ed;
}

.task-run {
	width: 41px;
	margin: 0 4px;
	border-bottom-color: #76b9ed;
}

.tray {
	display: flex;
	align-items: center;
	gap: 10px;
	margin-left: auto;
}

.clock {
	margin: 0 5px 0 -4px;
	font-family: Roboto, "Open Sans", sans-serif;
	font-size: 12px;
	text-align: center;
}

.peek {
	align-self: stretch;
	margin-left: 9px;
	width: 5px;
	border-left: 1px solid #7a8290;
}
```
